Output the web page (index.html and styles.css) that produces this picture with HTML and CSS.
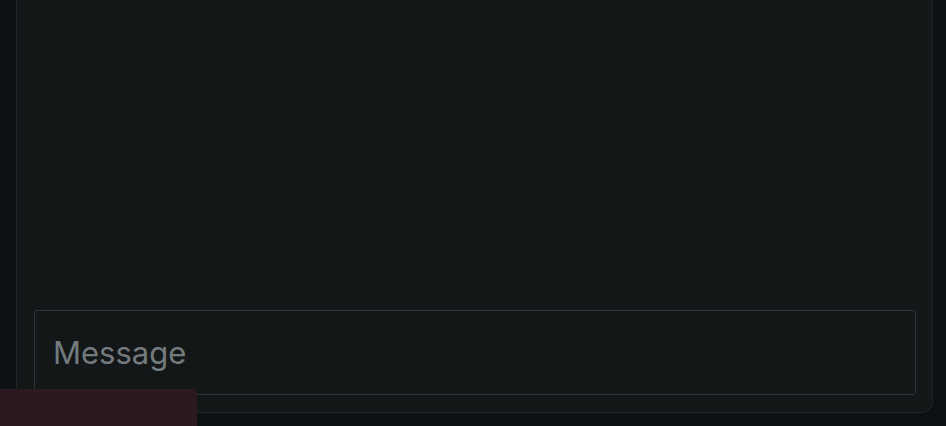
FILE: index.html
```html
<!DOCTYPE html>
<html>
<head>
  <title>Chat</title>
  <link rel="stylesheet" href="styles.css">
</head>
<body>
  <div class="chat-panel">
    <div class="chat-log"></div>
    <form class="chat-form">
      <input type="text" class="chat-input" placeholder="Message">
    </form>
  </div>

  <div class="toast"></div>
</body>
</html>
```

FILE: styles.css
```css
html,
body {
  margin: 0;
  height: 100%;
}

body {
  font-family: 'Inter', 'Roboto', sans-serif;
  background-color: #0d1113;
  color: #d0d4d6;
  overflow: hidden;
}

.chat-panel {
  box-sizing: border-box;
  width: 917px;
  height: 413px;
  margin-left: 16px;
  padding: 0 16px 17px 17px;
  display: flex;
  flex-direction: column;
  background-color: #131718;
  border: 1px solid #1f2426;
  border-top: none;
  border-radius: 0 0 12px 12px;
}

.chat-log {
  flex: 1;
}

.chat-form {
  margin: 0;
}

.chat-input {
  display: block;
  box-sizing: border-box;
  width: 100%;
  height: 85px;
  padding: 0 18px;
  font-family: inherit;
  font-size: 31px;
  color: #d0d4d6;
  background-color: #131718;
  border: 1px solid #2e3336;
  border-radius: 3px;
  outline: none;
}

.chat-input::placeholder {
  color: #737b7e;
}

.toast {
  position: absolute;
  left: 0;
  top: 389px;
  width: 197px;
  height: 37px;
  background-color: #2a1a20;
  border-radius: 0 5px 0 0;
}
```
